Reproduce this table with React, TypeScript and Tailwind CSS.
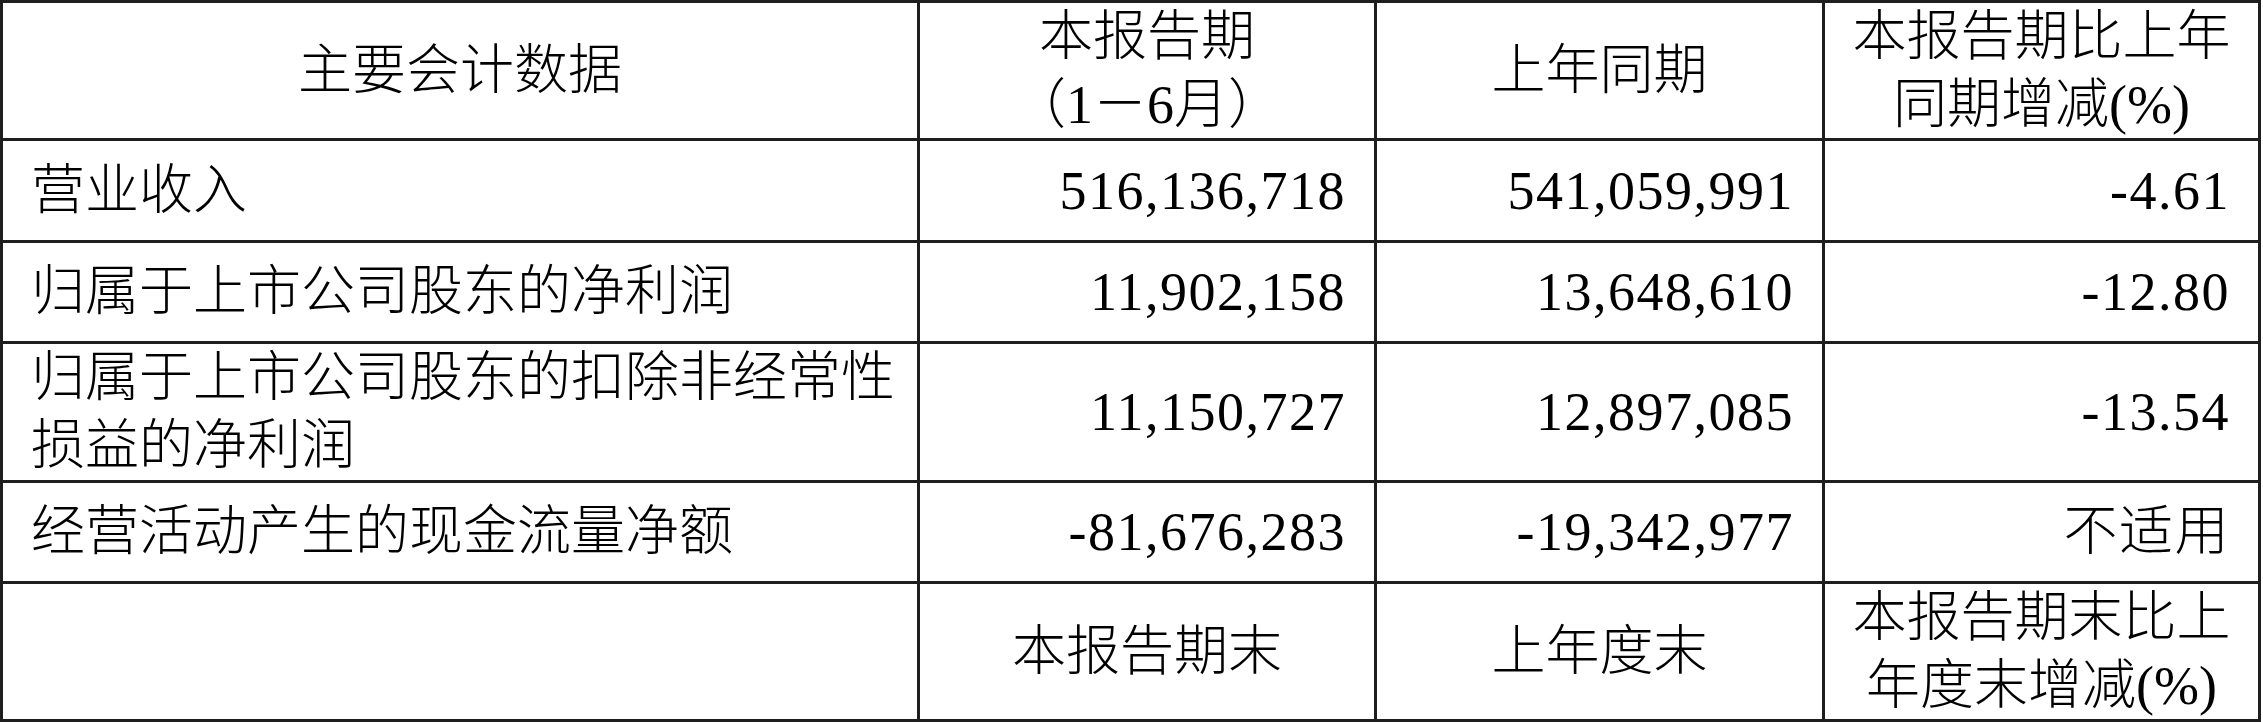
const cell = "flex items-center border-r-[3px] border-b-[3px] border-[#1e1e1e]";
const num = "justify-end pr-[28px] tracking-[1.5px] whitespace-nowrap";

type Row = { label: React.ReactNode; cur: string; prev: string; change: string };

const rows: Row[] = [
  { label: "营业收入", cur: "516,136,718", prev: "541,059,991", change: "-4.61" },
  { label: "归属于上市公司股东的净利润", cur: "11,902,158", prev: "13,648,610", change: "-12.80" },
  {
    label: (
      <>
        归属于上市公司股东的扣除非经常性
        <br />
        损益的净利润
      </>
    ),
    cur: "11,150,727",
    prev: "12,897,085",
    change: "-13.54",
  },
  { label: "经营活动产生的现金流量净额", cur: "-81,676,283", prev: "-19,342,977", change: "不适用" },
];

export default function App() {
  return (
    <div className="w-[2263px] h-[722px] bg-white text-black">
      <div
        className="grid grid-cols-[917px_457px_448px_436px] grid-rows-[138px_102px_101px_139px_101px_138px] border-l-[3px] border-t-[3px] border-[#1e1e1e] text-[54px] leading-[68px] font-light w-fit"
        style={{ fontFamily: '"Liberation Serif", "Noto Sans CJK SC", serif' }}
      >
        {/* header */}
        <div className={`${cell} justify-center`}>主要会计数据</div>
        <div className={`${cell} justify-center text-center`}>
          本报告期
          <br />
          （1－6月）
        </div>
        <div className={`${cell} justify-center`}>上年同期</div>
        <div className={`${cell} justify-center text-center`}>
          本报告期比上年
          <br />
          同期增减(%)
        </div>

        {rows.map((r, i) => (
          <div key={i} className="contents">
            <div className={`${cell} pl-[28px] whitespace-nowrap`}>{r.label}</div>
            <div className={`${cell} ${num}`}>{r.cur}</div>
            <div className={`${cell} ${num}`}>{r.prev}</div>
            <div className={`${cell} ${num}`}>{r.change}</div>
          </div>
        ))}

        {/* period end header */}
        <div className={cell} />
        <div className={`${cell} justify-center`}>本报告期末</div>
        <div className={`${cell} justify-center`}>上年度末</div>
        <div className={`${cell} justify-center text-center`}>
          本报告期末比上
          <br />
          年度末增减(%)
        </div>
      </div>
    </div>
  );
}
